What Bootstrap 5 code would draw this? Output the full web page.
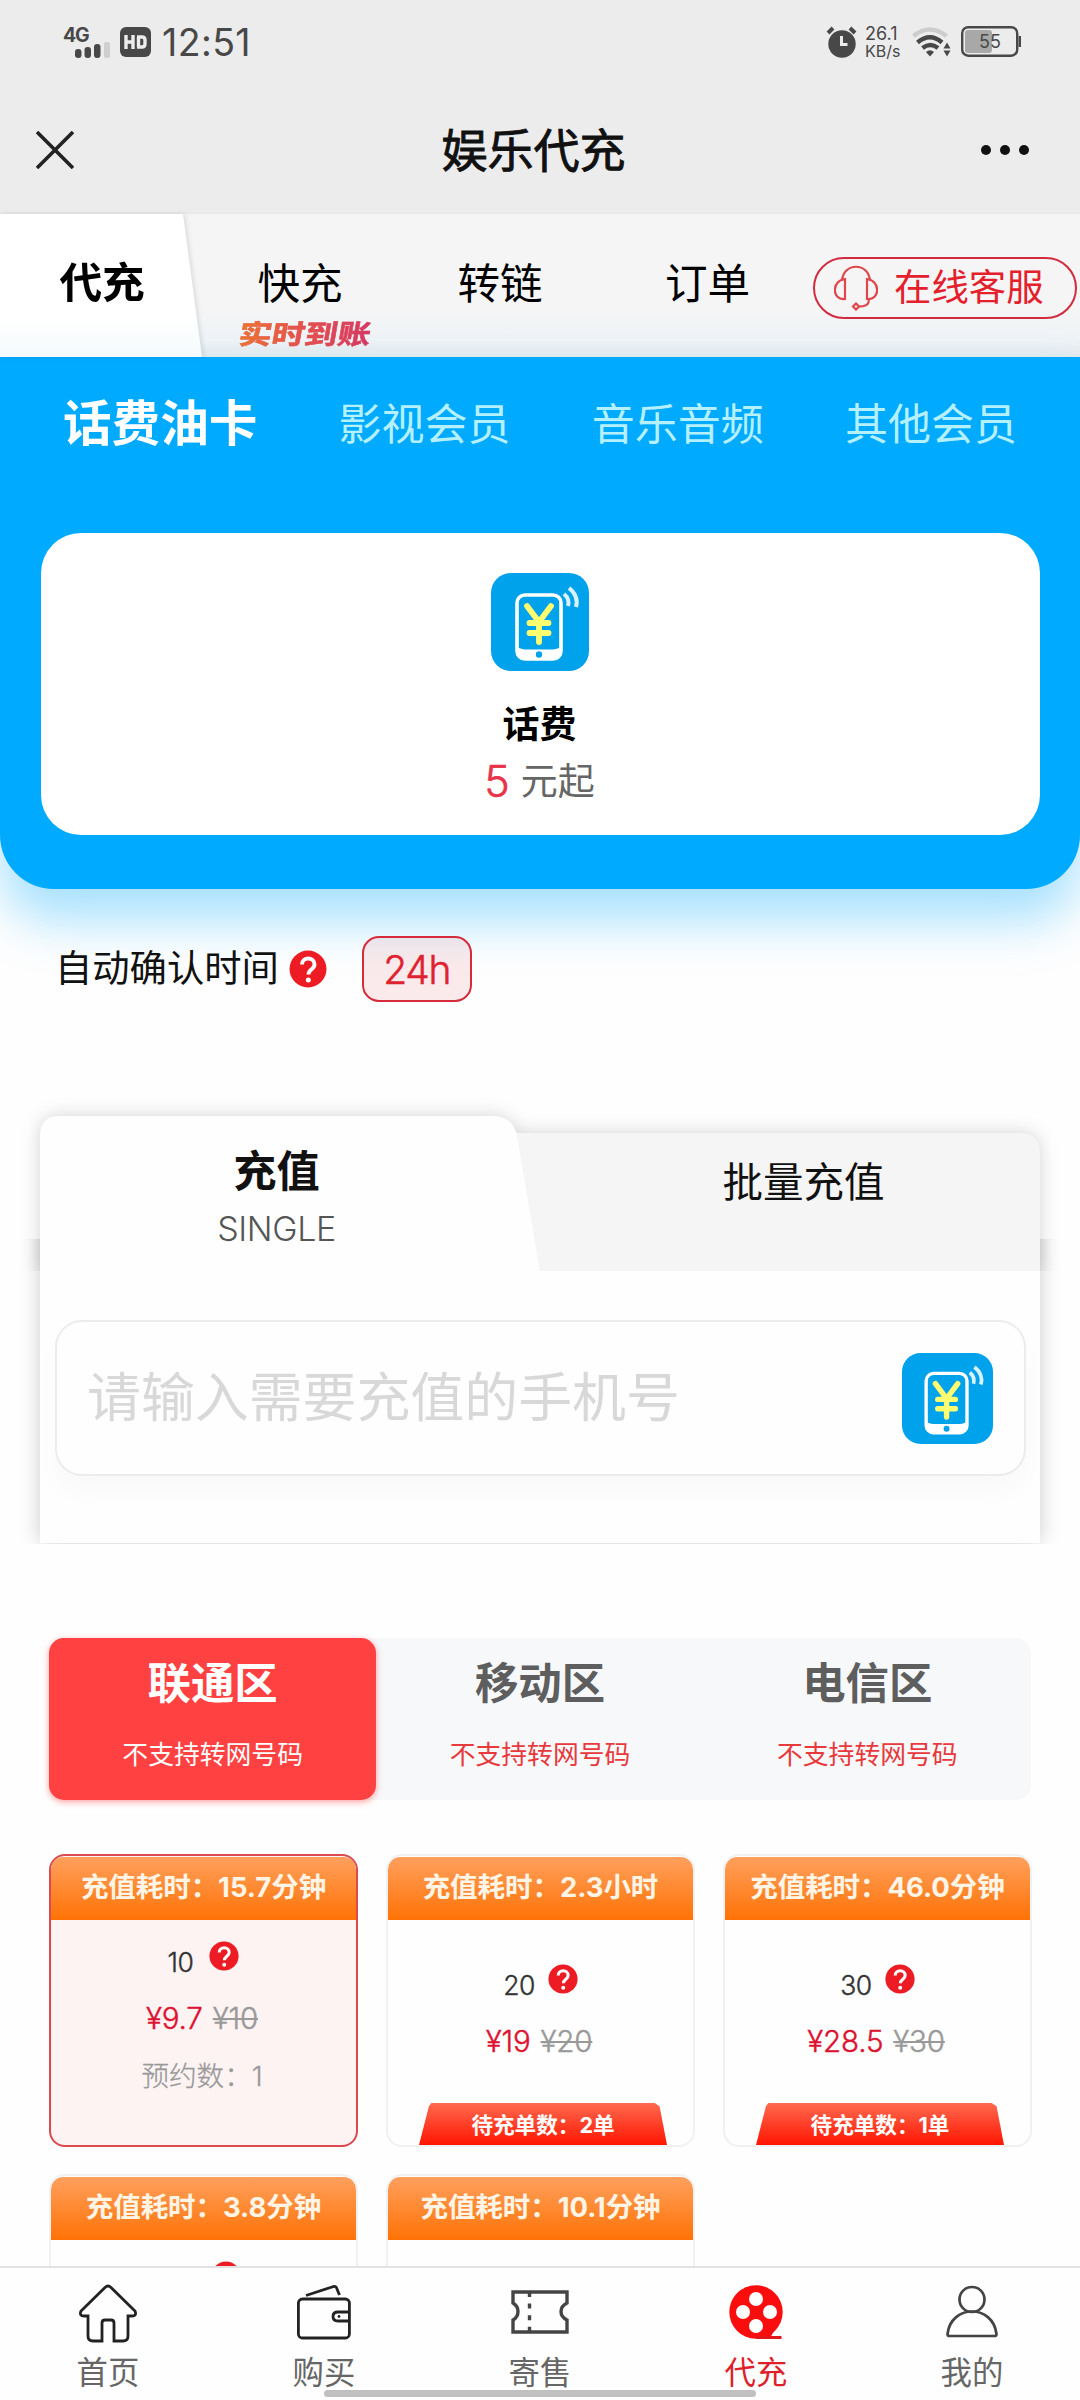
<!DOCTYPE html>
<html lang="zh-CN">
<head>
<meta charset="utf-8">
<meta name="viewport" content="width=device-width, initial-scale=1">
<title>娱乐代充</title>
<link href="https://cdn.jsdelivr.net/npm/bootstrap@5.3.0/dist/css/bootstrap.min.css" rel="stylesheet">
<style>
body{font-family:Inter,"Noto Sans CJK SC",sans-serif;color:#111;background:#fefefe;width:1080px;height:2400px;overflow:hidden;line-height:1}
.screen{width:1080px;height:2400px;overflow:hidden}
svg{display:block;flex:none}
.top-bar{background:#ececec;height:214px;border-bottom:2px solid #e9e9e9}
.status{height:83px;padding:0 58px 0 61px;color:#484848}
.status svg{overflow:visible}
.clock{font-size:37.5px;letter-spacing:.4px;margin:2px 0 0 11px}
.speed{font-size:18px;line-height:17px;margin:2px 13px 0 8px;width:35px;white-space:nowrap}
.title-row{height:131px;padding:2px 51px 0 36px}
.page-title{font-size:46px;-webkit-text-stroke:.9px #111;margin:1px -12px 0 0}
.main-tabs{height:143px;background:linear-gradient(#f5f5f5 65%,#eef3f6 88%,#e4eaed)}
.main-tabs .tab{font-size:42.6px;height:141px;color:#000;text-align:center}
.tab-on{width:202px;background:linear-gradient(#fff 72%,#f4fafc);clip-path:polygon(0 0,183px 0,202px 100%,0 100%);height:143px!important;padding:0 0 4px 2px}
.tab-shade{filter:drop-shadow(2px 0 2px rgba(0,0,0,.1))}
.instant{font-size:27px;line-height:27px;font-weight:700;transform:scaleX(1.22) skewX(-8deg);background:linear-gradient(90deg,#ed762c,#e35050 50%,#d33668);-webkit-background-clip:text;color:transparent;-webkit-text-stroke:.5px rgba(225,75,75,.6);left:47px;width:112px;text-align:center;top:107px;white-space:nowrap}
.service{width:264px;height:62px;border:2px solid #d22b3f;border-radius:31px;color:#e3202c;font-size:37.4px;padding-left:19px;margin-top:43px}
.hero{height:532px;background:#0af;border-radius:0 0 54px 54px;box-shadow:0 32px 50px rgba(0,170,255,.34);padding:0 40px 0 41px}
.hero-tabs{height:134px;padding:0 23px 0 22px;font-size:43px;color:#b5f0ff}
.hero-tabs b{font-size:48.6px;color:#fff}
.product{height:302px;border-radius:40px;background:#fff;margin-top:42px;padding:40px 2px 0 0}
.product b{font-size:37px;color:#000;margin-top:35px}
.from{font-size:37px;color:#666;margin-top:16px;height:44px}
.from span{font-size:43px;font-weight:300;color:#e8344a;margin-right:11px;-webkit-text-stroke:.6px #e8344a}
.confirm{height:66px;margin-top:47px;padding-left:55px;font-size:37.3px}
.hours{width:110px;height:66px;border:2px solid #d62b3a;border-radius:17px;background:rgba(226,32,44,.09);color:#df2230;font-size:39px;font-weight:300;-webkit-text-stroke:.5px #df2230;letter-spacing:-1.2px;margin-left:35px}
.charge{margin:114px 40px 0;height:428px}
.charge-head{height:155px;clip-path:inset(-40px -40px 0 -40px)}
.charge-head .shape{filter:drop-shadow(0 0 9px rgba(0,0,0,.17));overflow:visible;left:0;top:0}
.charge-head .half{width:50%;text-align:center}
.charge-side{left:0;right:0;top:90px;height:337px;clip-path:inset(33px -22px -1px -22px);box-shadow:0 0 20px rgba(0,0,0,.2);background:#fefefe}
.charge-name{font-size:43.2px;padding:34px 27px 0 0}
.charge-en{font-size:34px;font-weight:300;color:#555;padding:19px 27px 0 0;letter-spacing:-.4px}
.charge-many{font-size:40.5px;padding:47px 0 0 0;margin-left:-21px}
.phone-box{margin:49px 14px 0 15px;height:156px;border:2px solid #ececec;border-radius:27px;background:#fefefe;box-shadow:0 16px 26px rgba(0,0,0,.025);padding:0 31px 0 30px;font-size:53.9px;color:#d8d8d8}
.zones{margin:94px 49px 0 49px;height:162px;border-radius:15px;background:#f6f8fa}
.zone{flex:1;border-radius:15px;text-align:center;color:#5e5e5e;padding-top:24px}
.zone b{font-size:43.4px;display:block}
.zone span{font-size:25.8px;display:block;margin-top:37px;color:#e8393c}
.zone-on{background:#ff4141;color:#fff;box-shadow:0 2px 6px rgba(255,65,65,.5)}
.zone-on span{color:#fff}
.deals{margin:54px 48px 0 49px;display:grid;grid-template-columns:repeat(3,309px);column-gap:28px;row-gap:27px}
.deal{height:293px;border:2px solid #f1f1f1;border-radius:16px;text-align:center;overflow:hidden;background:#fefefe;font-size:26.5px;color:#333}
.deal-on{background:#fdf3f3;border-color:#da4a50}
.deal-head{height:63px;background:linear-gradient(#ffa05d,#ff7205);border-radius:12px 12px 0 0;margin-top:1px;color:#fff5e6;font-weight:700;font-size:27.5px;line-height:60px;white-space:nowrap;letter-spacing:-.05px}
.deal .num{height:30px;margin-top:44px}
.deal .num span{margin-top:8px;letter-spacing:-.5px;font-weight:300;-webkit-text-stroke:.4px}
.deal .price{font-size:29.6px;font-weight:300;margin:33px 3px 0 0;color:#dc1230;-webkit-text-stroke:.4px;letter-spacing:-.2px}
.deal .price s{color:#999;margin-left:10px;text-decoration-thickness:2px}
.deal .booked{font-size:27.6px;color:#999;margin:29px 3px 0 0;font-weight:300;-webkit-text-stroke:.3px}
.deal.tight .num{margin-top:21px}
.pending{width:248px;height:42px;clip-path:polygon(5% 0,95% 0,97% 8%,100% 100%,0 100%,4% 8%);background:linear-gradient(#ff6a50,#ff1500);color:#fff;font-size:21.6px;font-weight:700;line-height:45px;left:31px;bottom:0}
.bottom-nav{left:0;top:2266px;width:1080px;height:134px;border-top:2px solid #e2e2e2;background:#fefefe}
.bottom-nav .item{width:216px;font-size:31.4px;color:#666}
.bottom-nav .item svg{margin-top:15px;margin-bottom:15px}
.bottom-nav .cur{color:#df1f2c}
.grip{left:324px;bottom:3px;width:432px;height:7px;border-radius:4px;background:#c0c0c0}
</style>
<script src="https://cdn.jsdelivr.net/npm/bootstrap@5.3.0/dist/js/bootstrap.bundle.min.js"></script>
</head>
<body>
<svg width="0" height="0" class="position-absolute">
  <defs>
    <symbol id="pay" viewBox="0 0 98 98">
      <rect width="98" height="98" rx="20" fill="#00a2ec"/>
      <rect x="26" y="22" width="44" height="64" rx="8" fill="none" stroke="#fff" stroke-width="3.6"/>
      <path d="M26 74c5 3 9 2.500 14 2.500h16c5 0 9 .5 14-2.500v5a8 8 0 0 1-8 8H34a8 8 0 0 1-8-8z" fill="#fff"/>
      <circle cx="48" cy="81.500" r="3.200" fill="#00a2ec"/>
      <path d="M36 33l12 16 12-16M48 49v20M38.500 50h19M38.500 60h19" fill="none" stroke="#ffff70" stroke-width="5.800" stroke-linecap="round"/>
      <path d="M73 21q6 5 4 12M78 15q10 8 7 19" fill="none" stroke="#d8f2ff" stroke-width="4"/>
    </symbol>
    <symbol id="ask" viewBox="0 0 38 38">
      <circle cx="19" cy="19" r="18.500" fill="#ed1c24"/>
      <path d="M13 14.500c0-8 12.500-8 12.500 0 0 5-6 4.500-6 10" fill="none" stroke="#fff" stroke-width="3.900"/>
      <circle cx="19.300" cy="30" r="2.500" fill="#fff"/>
    </symbol>
  </defs>
</svg>
<div class="screen position-relative">
  <header class="top-bar">
    <div class="status d-flex align-items-center">
      <svg width="50" height="38" viewBox="-2 -4 50 38" style="margin-top:-4px">
        <text x="0" y="17" font-size="19.500" font-weight="700" letter-spacing="-1.200" fill="#484848" font-family="Inter">4G</text>
        <g fill="#484848"><rect x="12" y="24" width="6.500" height="9" rx="3"/><rect x="21.500" y="22" width="6.500" height="11" rx="3"/><rect x="31" y="19" width="6.500" height="14" rx="3"/><rect x="41" y="17" width="6" height="16" rx="2" fill="#cfcfcf"/></g>
      </svg>
      <svg width="31" height="30" viewBox="0 0 31 30" style="margin-left:9px">
        <rect width="31" height="30" rx="6" fill="#484848"/>
        <path d="M6 8v14M13 8v14M6 15h7M18.500 10v10M17 10h5q3 0 3 3v4q0 3-3 3h-5" fill="none" stroke="#ececec" stroke-width="3.400"/>
      </svg>
      <span class="clock">12:51</span>
      <svg width="31" height="32" viewBox="0 0 31 32" class="ms-auto">
        <circle cx="16" cy="18" r="13.700" fill="#484848"/><path d="M2 7l5-5M24 2l5 5" stroke="#484848" stroke-width="4"/><path d="M15.500 10v8.500h6" fill="none" stroke="#ececec" stroke-width="3"/>
      </svg>
      <div class="speed">26.1<br><span style="font-size:16px">KB/s</span></div>
      <svg width="40" height="30" viewBox="0 0 40 30" style="margin-left:-1px">
        <g fill="none" stroke-width="4.500"><path d="M1.500 9q16-13 33 0" stroke="#cdcdcd"/><path d="M5.500 15.500q12.500-10.500 24.500 0" stroke="#484848"/><path d="M10.500 21q8-6 15.500 0" stroke="#484848"/></g>
        <path d="M14 25q4-3.500 8 0l-4 4.500z" fill="#484848"/><path d="M31.500 21.500l3.500-6 3.500 6zM31.500 23.500l3.500 6 3.500-6z" fill="#484848"/>
      </svg>
      <svg width="61" height="31" viewBox="0 0 61 31" style="margin-left:9px">
        <rect x="4" y="4" width="27" height="23" rx="3" fill="#a8a8a8"/><rect x="1.200" y="1.200" width="55" height="28.500" rx="6" fill="none" stroke="#484848" stroke-width="2.400"/><path d="M58.800 10v11" stroke="#484848" stroke-width="2.400"/>
        <text x="18" y="22" font-size="18" textLength="22" fill="#484848" font-family="Inter">55</text>
      </svg>
    </div>
    <div class="title-row d-flex align-items-center justify-content-between">
      <svg width="38" height="38" viewBox="0 0 38 38"><path d="M1 1l36 36M37 1L1 37" stroke="#222" stroke-width="3.600"/></svg>
      <div class="page-title">娱乐代充</div>
      <svg width="48" height="10" viewBox="0 0 48 10"><g fill="#111"><circle cx="5" cy="5" r="5"/><circle cx="24" cy="5" r="5"/><circle cx="43" cy="5" r="5"/></g></svg>
    </div>
  </header>

  <nav class="main-tabs d-flex">
    <div class="tab-shade"><div class="tab tab-on fw-bold d-flex align-items-center justify-content-center">代充</div></div>
    <div class="tab position-relative d-flex align-items-center justify-content-center" style="width:196px">快充<span class="instant position-absolute">实时到账</span></div>
    <div class="tab d-flex align-items-center justify-content-center" style="width:204px">转链</div>
    <div class="tab d-flex align-items-center justify-content-center" style="width:211px">订单</div>
    <div class="service d-flex align-items-center">
      <svg width="44" height="46" viewBox="0 0 44 46"><g fill="none" stroke="#e0474d" stroke-width="2.200"><path d="M8 16C9-3 35-3 36 16M11 14v20C-3 35-2 15 11 14zM33 14v20C47 35 46 15 33 14zM35 34c0 7-5 7.500-11 7.500"/><path d="M22 38.500l3 3-3 3-3-3z"/></g></svg>
      <span style="margin-left:16px">在线客服</span>
    </div>
  </nav>

  <section class="hero">
    <div class="hero-tabs d-flex align-items-center justify-content-between"><b>话费油卡</b><span>影视会员</span><span>音乐音频</span><span>其他会员</span></div>
    <div class="product d-flex flex-column align-items-center">
      <svg width="98" height="98"><use href="#pay"/></svg>
      <b>话费</b>
      <div class="from d-flex align-items-center"><span>5</span>元起</div>
    </div>
  </section>

  <section class="confirm d-flex align-items-center">
    <span>自动确认时间</span>
    <svg width="38" height="38" style="margin-left:10px"><use href="#ask"/></svg>
    <div class="hours d-flex align-items-center justify-content-center">24h</div>
  </section>

  <section class="charge position-relative">
    <div class="charge-side position-absolute"></div>
    <div class="charge-head position-relative">
      <svg class="shape position-absolute" width="1000" height="156" viewBox="0 0 1000 156">
        <path d="M460 17H980Q1000 17 1000 37V156H460z" fill="#f5f5f5"/>
        <path d="M0 20Q0 0 20 0H455Q474 2 477 20L500 156H0z" fill="#fefefe"/>
      </svg>
      <div class="d-flex position-relative">
        <div class="half"><div class="charge-name fw-bold">充值</div><div class="charge-en">SINGLE</div></div>
        <div class="half"><div class="charge-many ps-5">批量充值</div></div>
      </div>
    </div>
    <div class="phone-box position-relative d-flex align-items-center justify-content-between">
      <span>请输入需要充值的手机号</span>
      <svg width="91" height="91"><use href="#pay"/></svg>
    </div>
  </section>

  <section class="zones d-flex">
    <div class="zone zone-on"><b>联通区</b><span>不支持转网号码</span></div>
    <div class="zone"><b>移动区</b><span>不支持转网号码</span></div>
    <div class="zone"><b>电信区</b><span>不支持转网号码</span></div>
  </section>

  <section class="deals">
    <div class="deal deal-on tight">
      <div class="deal-head">充值耗时：15.7分钟</div>
      <div class="num d-flex justify-content-center"><span>10</span><svg width="30" height="30" style="margin-left:16px"><use href="#ask"/></svg></div>
      <div class="price">¥9.7<s>¥10</s></div>
      <div class="booked">预约数：1</div>
    </div>
    <div class="deal position-relative">
      <div class="deal-head">充值耗时：2.3小时</div>
      <div class="num d-flex justify-content-center"><span>20</span><svg width="30" height="30" style="margin-left:13px"><use href="#ask"/></svg></div>
      <div class="price">¥19<s>¥20</s></div>
      <div class="pending position-absolute">待充单数：2单</div>
    </div>
    <div class="deal position-relative">
      <div class="deal-head">充值耗时：46.0分钟</div>
      <div class="num d-flex justify-content-center"><span>30</span><svg width="30" height="30" style="margin-left:13px"><use href="#ask"/></svg></div>
      <div class="price">¥28.5<s>¥30</s></div>
      <div class="pending position-absolute">待充单数：1单</div>
    </div>
    <div class="deal tight">
      <div class="deal-head">充值耗时：3.8分钟</div>
      <div class="num d-flex justify-content-center"><span>50</span><svg width="30" height="30" style="margin-left:13px"><use href="#ask"/></svg></div>
    </div>
    <div class="deal">
      <div class="deal-head">充值耗时：10.1分钟</div>
    </div>
  </section>

  <nav class="bottom-nav position-absolute d-flex">
    <div class="item d-flex flex-column align-items-center">
      <svg width="60" height="60" viewBox="0 0 60 60"><path d="M27 4.500q3-3 6 0L57 28q2 5-3 5h-4v20q0 5-5 5h-9V40q0-3-3-3h-6q-3 0-3 3v18h-9q-5 0-5-5V33H6q-5 0-3-5z" fill="none" stroke="#222" stroke-width="2.800"/></svg>首页
    </div>
    <div class="item d-flex flex-column align-items-center">
      <svg width="60" height="60" viewBox="0 0 60 60"><g fill="none" stroke="#222" stroke-width="2.800"><rect x="4.400" y="16" width="51" height="39" rx="4"/><path d="M55 29H44q-5 0-5 4.500t5 4.500h11M12 12.500L38 4q4-2 5 2l2.500 6"/></g><circle cx="45" cy="33.500" r="1.400" fill="#222"/></svg>购买
    </div>
    <div class="item d-flex flex-column align-items-center">
      <svg width="60" height="60" viewBox="0 0 60 60"><g fill="none" stroke="#444" stroke-width="3.400"><path d="M3 9h54v11q-6 3-6 8.500t6 8.500v12H3V37q5-3 5-8.500T3 20z"/><path d="M19.500 9v40" stroke-dasharray="5 6.600"/></g></svg>寄售
    </div>
    <div class="item cur d-flex flex-column align-items-center">
      <svg width="60" height="60" viewBox="0 0 60 60"><circle cx="30" cy="29" r="26.700" fill="#fa0d0d"/><path d="M30 53h25.500v3H30z" fill="#e0161a"/><path d="M44 49l5-3-4 7.500h-6z" fill="#fa0d0d"/><g fill="#fff"><circle cx="30" cy="16" r="7"/><circle cx="17" cy="29" r="7"/><circle cx="44" cy="29" r="7"/><circle cx="30" cy="43" r="7"/></g></svg>代充
    </div>
    <div class="item d-flex flex-column align-items-center">
      <svg width="60" height="60" viewBox="0 0 60 60"><g fill="none" stroke="#444" stroke-width="2.700"><circle cx="30" cy="16.500" r="12.500"/><path d="M5.500 51C9 21 51 21 54.500 51q0 2-2 2h-45q-2 0-2-2z"/></g></svg>我的
    </div>
    <div class="grip position-absolute"></div>
  </nav>
</div>
</body>
</html>
